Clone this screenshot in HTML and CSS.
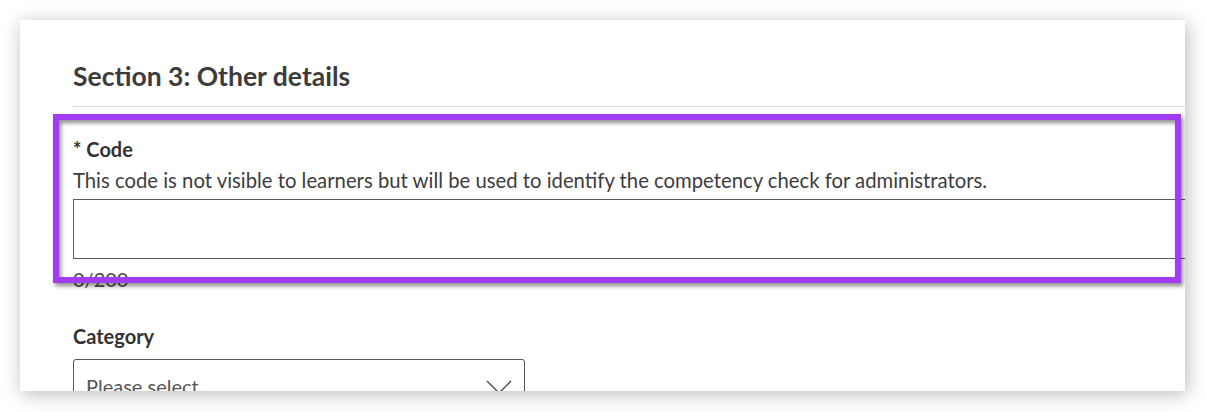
FILE: index.html
```html
<!DOCTYPE html>
<html lang="en">
<head>
<meta charset="utf-8">
<title>Section 3: Other details</title>
<link rel="stylesheet" href="styles.css">
</head>
<body>
<div class="card">
  <h2 class="section-title">Section 3: Other details</h2>
  <div class="field code-field">
    <div class="label">* Code</div>
    <p class="help">This code is not visible to learners but will be used to identify the competency check for administrators.</p>
    <div class="text-input"></div>
    <div class="counter">0/200</div>
  </div>
  <div class="field category-field">
    <div class="label">Category</div>
    <div class="select">
      <span class="placeholder">Please select</span>
      <svg class="chevron" width="26" height="14" viewBox="0 0 26 14"><path d="M1 1 L13 13 L25 1" fill="none" stroke="#4a4a4a" stroke-width="1.4"/></svg>
    </div>
  </div>
  <div class="highlight"></div>
</div>
</body>
</html>
```
FILE: styles.css
```css
html, body {
  margin: 0;
  padding: 0;
  background: #ffffff;
}
body {
  font-family: Lato, "Open Sans", sans-serif;
  color: #3d3d3d;
  padding: 20px;
  width: 1206px;
  height: 412px;
  box-sizing: border-box;
  overflow: hidden;
}
.card {
  position: relative;
  width: 1165px;
  height: 371px;
  box-sizing: border-box;
  padding: 40px 0 0 53px;
  background: #fff;
  overflow: hidden;
  box-shadow: 2px 3px 18px rgba(0, 0, 0, 0.28);
}
.section-title {
  margin: 0;
  font-size: 26.5px;
  line-height: 32px;
  font-weight: 700;
  color: #3c3c3c;
  padding-bottom: 14px;
  border-bottom: 1px solid #d9d9d9;
}
.label {
  font-size: 20px;
  line-height: 24px;
  font-weight: 700;
  color: #333;
}
.code-field {
  margin-top: 30px;
}
.help {
  margin: 7px 0 0;
  font-size: 20.3px;
  line-height: 24px;
  color: #3d3d3d;
}
.text-input {
  margin-top: 7px;
  height: 58px;
  width: calc(100% + 20px);
  border: 1px solid #5a5a5a;
  background: #fff;
}
.counter {
  margin-top: 8px;
  font-size: 20px;
  line-height: 24px;
  color: #4a4a4a;
}
.category-field {
  margin-top: 33px;
}
.select {
  margin-top: 11px;
  width: 452px;
  height: 48px;
  box-sizing: border-box;
  border: 1px solid #555;
  border-radius: 3px;
  display: flex;
  align-items: flex-start;
  justify-content: space-between;
  padding: 14px 12px 0 12px;
}
.placeholder {
  font-size: 20px;
  line-height: 24px;
  color: #555;
}
.chevron {
  margin-top: 6px;
}
.highlight {
  position: absolute;
  left: 33px;
  top: 94px;
  width: 1128px;
  height: 169px;
  box-sizing: border-box;
  border: 6px solid #a13cf2;
  filter: drop-shadow(2px 3px 2px rgba(0, 0, 0, 0.45));
}
```
